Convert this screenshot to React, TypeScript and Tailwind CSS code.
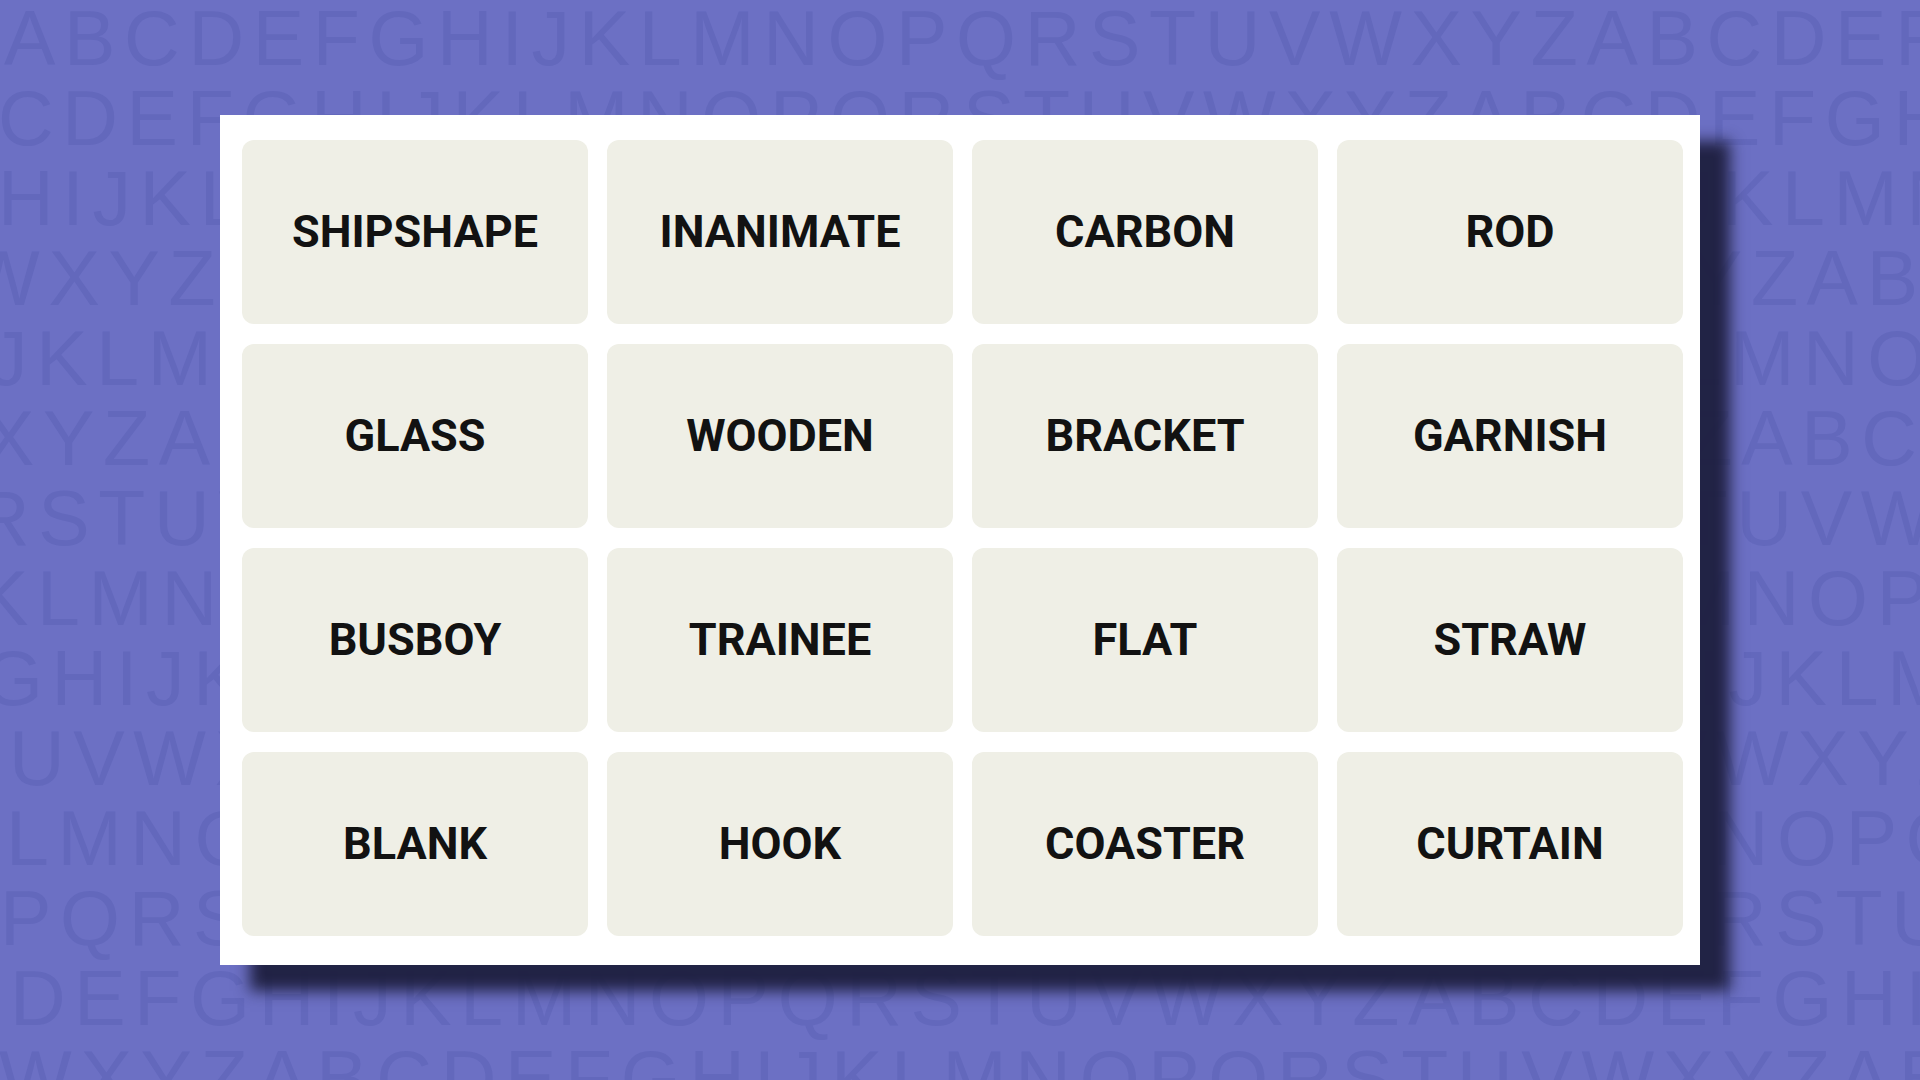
import React from 'react';

const ALPHABET = 'ABCDEFGHIJKLMNOPQRSTUVWXYZ';

// Builds a run of letters starting at `from`, wrapping Z -> A.
function letterRun(from: string, count = 40): string {
  const start = ALPHABET.indexOf(from);
  let out = '';
  for (let i = 0; i < count; i++) out += ALPHABET[(start + i) % 26];
  return out;
}

// Background rows: first letter and horizontal nudge of each line
const rows = [
  { from: 'A', shift: 'ml-[4px]' },
  { from: 'C', shift: '-ml-[2px]' },
  { from: 'H', shift: '-ml-[2px]' },
  { from: 'W', shift: '-ml-[33px]' },
  { from: 'J', shift: '-ml-[11px]' },
  { from: 'X', shift: '-ml-[17px]' },
  { from: 'R', shift: '-ml-[26px]' },
  { from: 'K', shift: '-ml-[23px]' },
  { from: 'G', shift: '-ml-[17px]' },
  { from: 'U', shift: 'ml-[9px]' },
  { from: 'L', shift: 'ml-[6px]' },
  { from: 'P', shift: 'ml-0' },
  { from: 'D', shift: 'ml-[10px]' },
  { from: 'W', shift: '-ml-[1px]' },
];

const words = [
  'SHIPSHAPE', 'INANIMATE', 'CARBON', 'ROD',
  'GLASS', 'WOODEN', 'BRACKET', 'GARNISH',
  'BUSBOY', 'TRAINEE', 'FLAT', 'STRAW',
  'BLANK', 'HOOK', 'COASTER', 'CURTAIN',
];

function LetterBackdrop(): JSX.Element {
  return (
    <div className="absolute inset-0 overflow-hidden pointer-events-none select-none">
      <div className="-mt-[2px] flex flex-col font-['Liberation_Sans',Arial,sans-serif] text-[77px] leading-[80px] tracking-[8.7px] text-[#6368bc]">
        {rows.map((row, i) => (
          <div key={i} className={`whitespace-nowrap ${row.shift}`}>
            {letterRun(row.from)}
          </div>
        ))}
      </div>
    </div>
  );
}

function Tile({ word }: { word: string }): JSX.Element {
  return (
    <div className="h-[184px] rounded-[12px] bg-[#efefe6] flex items-center justify-center">
      <span className="font-['Roboto',sans-serif] font-bold text-[45px] text-[#121212]">{word}</span>
    </div>
  );
}

export default function App(): JSX.Element {
  return (
    <div className="relative w-[1920px] h-[1080px] overflow-hidden bg-[#6c70c4] flex items-center justify-center">
      <LetterBackdrop />
      <div className="relative w-[1480px] bg-white pt-[25px] pl-[22px] pr-[17px] pb-[29px] shadow-[30px_26px_14px_rgba(30,31,62,0.95)]">
        <div className="grid grid-cols-4 gap-x-[19px] gap-y-[20px]">
          {words.map((w) => (
            <Tile key={w} word={w} />
          ))}
        </div>
      </div>
    </div>
  );
}
